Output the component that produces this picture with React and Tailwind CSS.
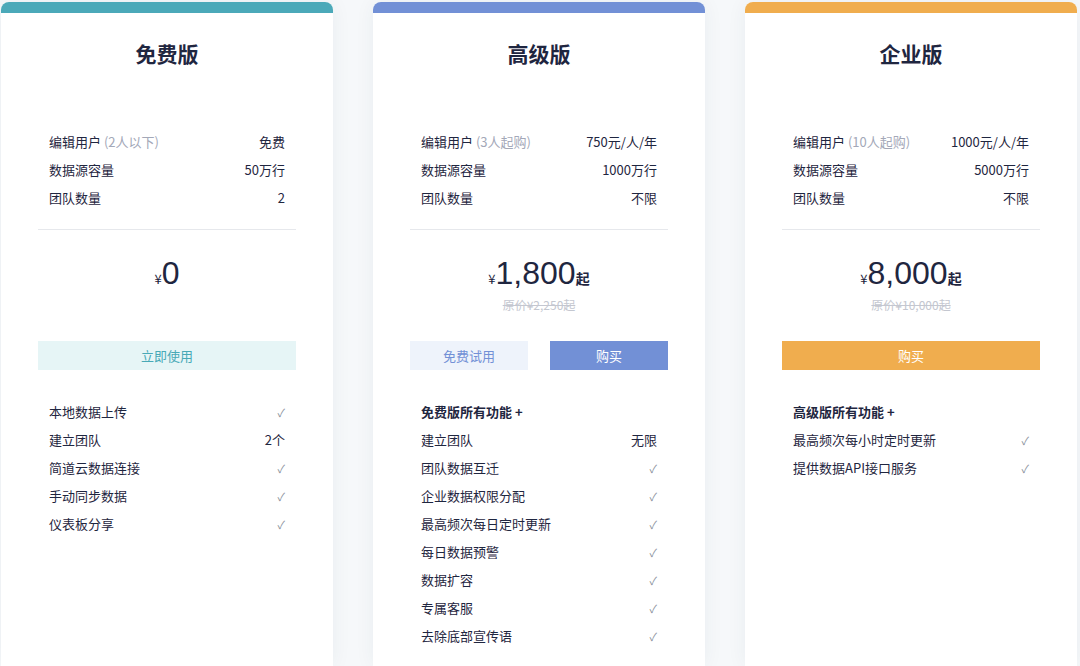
const F = { fontFamily: '"Noto Sans CJK SC","Noto Sans",sans-serif' };

function Row({ l, sub, r, bold }) {
  return (
    <div className="flex justify-between items-center h-[28px] px-[11px] text-[13px] text-[#1f2640]">
      <span className={bold ? "font-bold" : ""}>{l}{sub && <span className="text-[#a3a8b8]"> ({sub})</span>}</span>
      <span className={r === "✓" ? "text-[#8a8f9c] text-[11px]" : ""}>{r}</span>
    </div>
  );
}

function Card({ color, title, specs, price, suffix, orig, buttons, features }) {
  return (
    <div className="w-[332px] shrink-0 bg-white rounded-t-[8px] overflow-hidden shadow-[0_0_20px_rgba(40,60,90,0.06)] flex flex-col">
      <div className="h-[11px]" style={{ background: color }} />
      <div className="px-[37px]">
        <div className="h-[82px] flex items-center justify-center text-[21px] font-bold text-[#1f2640] pb-[1px]">{title}</div>
        <div className="pt-[33px]">{specs.map((s, i) => <Row key={i} {...s} />)}</div>
        <div className="mt-[17px] border-t border-[#e6e8ec]" />
        <div className="h-[111px] flex flex-col items-center pt-[24px]">
          <div className="flex items-baseline text-[#1f2640]">
            <span className="text-[13px]">¥</span>
            <span className="text-[32px] leading-[38px]" style={{ fontFamily: '"Helvetica","Liberation Sans",sans-serif' }}>{price}</span>
            {suffix && <span className="text-[14px] font-bold">{suffix}</span>}
          </div>
          {orig && <div className="text-[12px] text-[#c4c7d0] line-through mt-[4px]">{orig}</div>}
        </div>
        <div className="flex gap-[22px] h-[29px]">{buttons}</div>
        <div className="pt-[28px]">{features.map((s, i) => <Row key={i} {...s} />)}</div>
      </div>
    </div>
  );
}

const B = ({ bg, fg, children }) => (
  <div className="flex-1 flex items-center justify-center text-[13px]" style={{ background: bg, color: fg }}>{children}</div>
);

export default function App() {
  const ck = "✓";
  return (
    <div style={F} className="w-[1080px] h-[666px] overflow-hidden bg-[#f6f8fa] flex gap-[40px] pt-[2px] px-[1px]">
      <Card color="#4ba9b9" title="免费版"
        specs={[{ l: "编辑用户", sub: "2人以下", r: "免费" }, { l: "数据源容量", r: "50万行" }, { l: "团队数量", r: "2" }]}
        price="0"
        buttons={<B bg="#e6f5f6" fg="#48a9b6">立即使用</B>}
        features={[{ l: "本地数据上传", r: ck }, { l: "建立团队", r: "2个" }, { l: "简道云数据连接", r: ck }, { l: "手动同步数据", r: ck }, { l: "仪表板分享", r: ck }]} />
      <Card color="#7290d6" title="高级版"
        specs={[{ l: "编辑用户", sub: "3人起购", r: "750元/人/年" }, { l: "数据源容量", r: "1000万行" }, { l: "团队数量", r: "不限" }]}
        price="1,800" suffix="起" orig="原价¥2,250起"
        buttons={<><B bg="#eef3fb" fg="#7290d6">免费试用</B><B bg="#7290d6" fg="#fff">购买</B></>}
        features={[{ l: "免费版所有功能 +", bold: true }, { l: "建立团队", r: "无限" }, { l: "团队数据互迁", r: ck }, { l: "企业数据权限分配", r: ck }, { l: "最高频次每日定时更新", r: ck }, { l: "每日数据预警", r: ck }, { l: "数据扩容", r: ck }, { l: "专属客服", r: ck }, { l: "去除底部宣传语", r: ck }]} />
      <Card color="#f0ad4e" title="企业版"
        specs={[{ l: "编辑用户", sub: "10人起购", r: "1000元/人/年" }, { l: "数据源容量", r: "5000万行" }, { l: "团队数量", r: "不限" }]}
        price="8,000" suffix="起" orig="原价¥10,000起"
        buttons={<B bg="#f0ad4e" fg="#fff">购买</B>}
        features={[{ l: "高级版所有功能 +", bold: true }, { l: "最高频次每小时定时更新", r: ck }, { l: "提供数据API接口服务", r: ck }]} />
    </div>
  );
}
